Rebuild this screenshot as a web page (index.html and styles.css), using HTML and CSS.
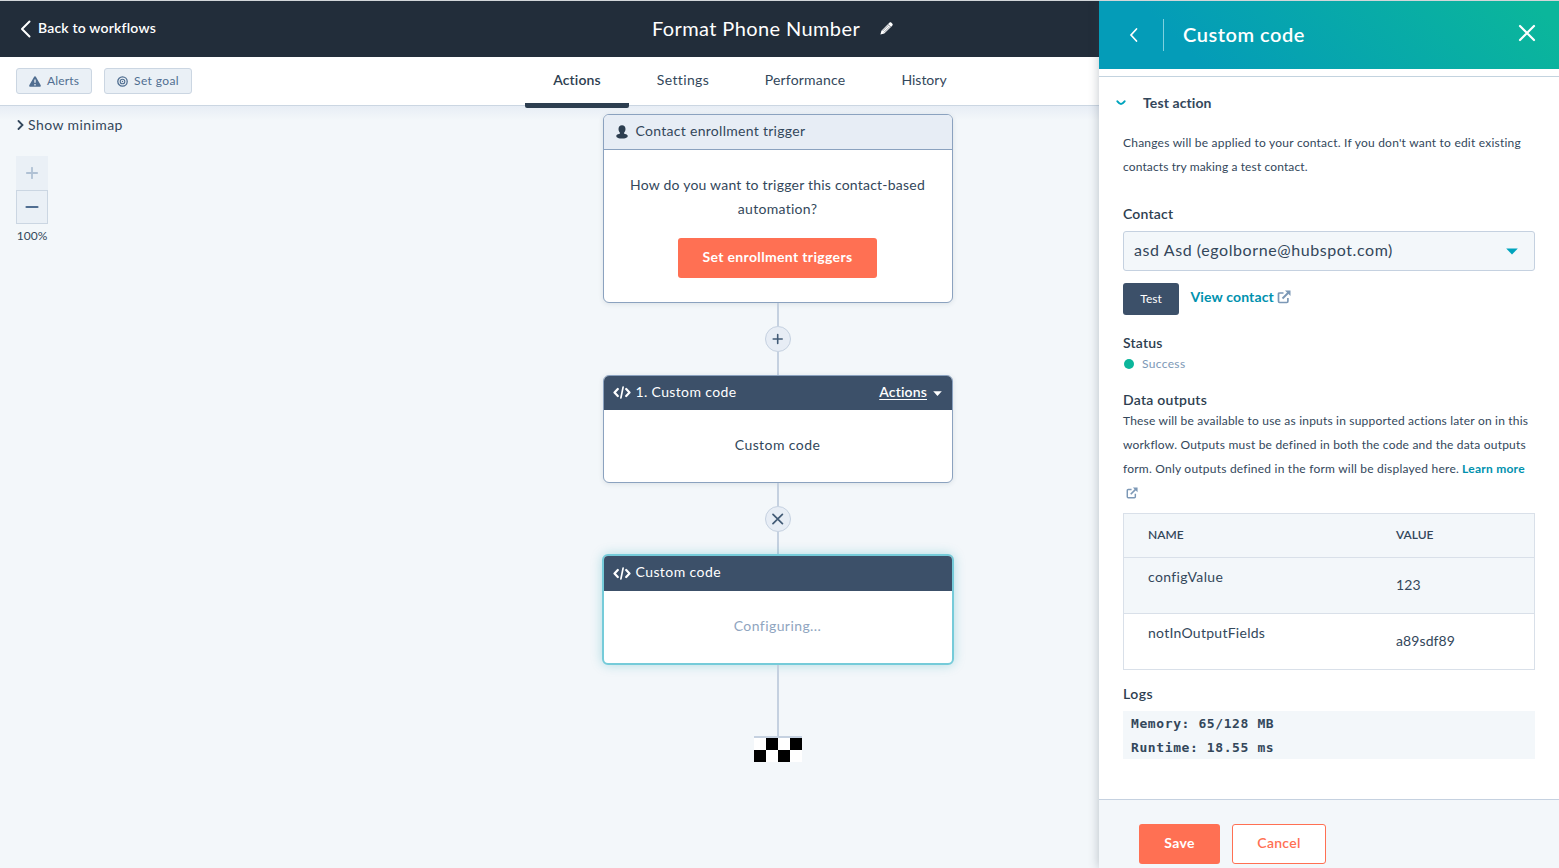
FILE: index.html
```html
<!DOCTYPE html>
<html lang="en">
<head>
<meta charset="utf-8">
<title>Format Phone Number</title>
<link rel="stylesheet" href="styles.css">
</head>
<body>
<div class="app">
  <header class="topbar">
    <a class="back"><svg width="12" height="18" viewBox="0 0 12 18"><path d="M9.500 1.500 2 9l7.500 7.500" fill="none" stroke="#fff" stroke-width="2" stroke-linecap="round" stroke-linejoin="round"/></svg><span class="back-label">Back to workflows</span></a>
    <h1 class="title"><span class="title-label">Format Phone Number</span><svg width="13" height="13" viewBox="0 0 13 13"><path d="M.4 12.600 1.400 8.700 8.600 1.500 9.600.6c.5-.5 1.100-.4 1.600 0l1.200 1.200c.5.5.5 1.100 0 1.600l-.9 1-7.200 7.200z" fill="#fff"/><path d="m2.600 9 5.800-5.800M4 10.400l5.800-5.800M8 2.200l2.800 2.800" stroke="#222d3a" stroke-width=".5"/></svg></h1>
  </header>
  <div class="toolbar">
    <div class="tools">
      <button class="tool alerts"><svg width="12" height="11" viewBox="0 0 12 11"><path d="M6 .3c.5 0 .8.3 1 .7l4.600 8.100c.5.9.1 1.700-.9 1.700H1.300c-1 0-1.400-.8-.9-1.700L5 1c.2-.4.5-.7 1-.7z" fill="#506e91"/><path d="M6 3.600v3.200M6 8v1.400" stroke="#eaf0f6" stroke-width="1.300"/></svg><span class="tool-label">Alerts</span></button>
      <button class="tool goal"><svg width="11" height="11" viewBox="0 0 11 11" fill="none" stroke="#506e91"><circle cx="5.500" cy="5.500" r="4.700" stroke-width="1.300"/><circle cx="5.500" cy="5.500" r="2.300" stroke-width="1.100"/><circle cx="5.500" cy="5.500" r=".7" fill="#506e91" stroke="none"/></svg><span class="tool-label">Set goal</span></button>
    </div>
    <nav class="tabs">
      <a class="tab tab-actions"><span>Actions</span></a>
      <a class="tab tab-settings"><span>Settings</span></a>
      <a class="tab tab-performance"><span>Performance</span></a>
      <a class="tab tab-history"><span>History</span></a>
    </nav>
  </div>
  <main class="canvas">
    <aside class="map-tools">
      <a class="minimap"><svg width="8" height="10" viewBox="0 0 8 10"><path d="m2.500 1 4 4-4 4" fill="none" stroke="#33475b" stroke-width="1.800" stroke-linecap="round"/></svg><span>Show minimap</span></a>
      <div class="zoom">
        <button class="zoom-in"><svg width="12" height="12" viewBox="0 0 12 12"><path d="M.8 6h10.400M6 .8v10.400" stroke="#b0c1d4" stroke-width="1.800" stroke-linecap="round"/></svg></button>
        <button class="zoom-out"><svg width="14" height="12" viewBox="0 0 14 12"><path d="M1.500 6h11" stroke="#506e91" stroke-width="2.200" stroke-linecap="round"/></svg></button>
        <span class="zoom-level">100%</span>
      </div>
    </aside>
    <section class="flow">
      <article class="card trigger">
        <div class="trigger-head"><svg width="12" height="14" viewBox="0 0 12 14"><path d="M6 .3c2.200 0 3.500 1.500 3.500 3.700 0 1.600-.7 3.200-1.700 4 .1.500.4.700 1.100.9 1.900.4 2.800.9 2.800 2.100 0 1.800-2.700 2.600-5.700 2.600S.3 12.800.3 11c0-1.200.9-1.700 2.800-2.100.7-.2 1-.4 1.100-.9-1-.8-1.700-2.400-1.700-4C2.500 1.800 3.800.3 6 .3z" fill="#2d3e50"/></svg><span class="head-label enrollment">Contact enrollment trigger</span></div>
        <div class="trigger-body"><p class="ask"><span class="ask-1">How do you want to trigger this contact-based</span><br><span class="ask-2">automation?</span></p><button class="btn-primary enroll"><span>Set enrollment triggers</span></button></div>
      </article>
      <div class="line short"></div>
      <button class="node"><svg width="12" height="12" viewBox="0 0 12 12"><path d="M1.200 6h9M5.700 1.500v9" stroke="#425b76" stroke-width="1.600" stroke-linecap="round"/></svg></button>
      <div class="line short"></div>
      <article class="card">
        <div class="code-head"><svg class="code" width="18" height="13" viewBox="0 0 18 13"><path d="M4.800 3 1.500 6.500 4.800 10M13.200 3l3.300 3.500-3.300 3.500" fill="none" stroke="#fff" stroke-width="2.200" stroke-linecap="round" stroke-linejoin="round"/><path d="M10.100 1.200 7.900 11.800" stroke="#fff" stroke-width="1.700" stroke-linecap="round"/></svg><span class="head-label step">1. Custom code</span><a class="actions">Actions</a><svg class="caret" width="9" height="5" viewBox="0 0 9 5"><path d="M.2.3h8.600L4.500 4.900z" fill="#fff"/></svg></div>
        <div class="card-body"><span>Custom code</span></div>
      </article>
      <div class="line short"></div>
      <button class="node"><svg width="12" height="12" viewBox="0 0 12 12"><path d="m1 1.300 9.400 9.400M10.400 1.300 1 10.700" stroke="#425b76" stroke-width="1.700" stroke-linecap="round"/></svg></button>
      <div class="line third"></div>
      <article class="card active">
        <div class="code-head"><svg class="code" width="18" height="13" viewBox="0 0 18 13"><path d="M4.800 3 1.500 6.500 4.800 10M13.200 3l3.300 3.500-3.300 3.500" fill="none" stroke="#fff" stroke-width="2.200" stroke-linecap="round" stroke-linejoin="round"/><path d="M10.100 1.200 7.900 11.800" stroke="#fff" stroke-width="1.700" stroke-linecap="round"/></svg><span class="head-label custom">Custom code</span></div>
        <div class="card-body muted"><span>Configuring...</span></div>
      </article>
      <div class="line long"></div>
      <svg class="finish" width="48" height="24" viewBox="0 0 48 24" shape-rendering="crispEdges"><path fill="#fff" d="M0 0h48v24H0z"/><path d="M12 0h12v12H12zM36 0h12v12H36zM0 12h12v12H0zM24 12h12v12H24z"/></svg>
    </section>
  </main>
</div>
<aside class="panel">
  <header class="panel-head">
    <svg class="prev" width="10" height="16" viewBox="0 0 10 16"><path d="M7.500 2 2 8l5.500 6" fill="none" stroke="#fff" stroke-width="1.700" stroke-linecap="round"/></svg>
    <h2><span>Custom code</span></h2>
    <svg class="close" width="18" height="18" viewBox="0 0 18 18"><path d="m2 2 14 14M16 2 2 16" stroke="#fff" stroke-width="2.200" stroke-linecap="round"/></svg>
  </header>
  <div class="panel-body">
    <h3 class="section"><svg width="10" height="6" viewBox="0 0 10 6"><path d="M1.400 1.300C3 3.200 4 4.100 5 4.100S7 3.200 8.600 1.300" fill="none" stroke="#00a4bd" stroke-width="2" stroke-linecap="round"/></svg><span>Test action</span></h3>
    <p class="note"><span class="note-1">Changes will be applied to your contact. If you don't want to edit existing</span><br><span class="note-2">contacts try making a test contact.</span></p>
    <h4 class="label contact"><span>Contact</span></h4>
    <div class="select"><span>asd Asd (egolborne@hubspot.com)</span><svg width="12" height="7" viewBox="0 0 12 7"><path d="M.2.4h11.600L6 6.500z" fill="#00a4bd"/></svg></div>
    <div class="test-row"><button class="test"><span>Test</span></button><a class="link view">View contact</a><svg class="ext" width="14" height="14" viewBox="0 0 14 14"><path d="M6.500 3H2.600Q1.500 3 1.500 4v7.300q0 1.200 1.100 1.200h7.200q1.100 0 1.100-1.200V8" fill="none" stroke="#7c98b6" stroke-width="1.700"/><path d="m5.500 8.500 6-6" stroke="#7c98b6" stroke-width="1.900"/><path d="M8 .5h5.500V6z" fill="#7c98b6"/></svg></div>
    <h4 class="label status"><span>Status</span></h4>
    <div class="success"><i class="dot"></i><span>Success</span></div>
    <h4 class="label outputs"><span>Data outputs</span></h4>
    <p class="note outputs-note"><span class="out-1">These will be available to use as inputs in supported actions later on in this</span><br><span class="out-2">workflow. Outputs must be defined in both the code and the data outputs</span><br><span class="out-3">form. Only outputs defined in the form will be displayed here.</span> <a class="link learn">Learn more</a><br><svg class="ext-small" width="12" height="12" viewBox="0 0 14 14"><path d="M6.500 3H2.600Q1.500 3 1.500 4v7.300q0 1.200 1.100 1.200h7.200q1.100 0 1.100-1.200V8" fill="none" stroke="#7c98b6" stroke-width="1.700"/><path d="m5.500 8.500 6-6" stroke="#7c98b6" stroke-width="1.900"/><path d="M8 .5h5.500V6z" fill="#7c98b6"/></svg></p>
    <div class="table">
      <div class="row head"><span>NAME</span><span>VALUE</span></div>
      <div class="row shaded"><span class="td-config">configValue</span><span class="value">123</span></div>
      <div class="row"><span class="td-fields">notInOutputFields</span><span class="value">a89sdf89</span></div>
    </div>
    <h4 class="label logs"><span>Logs</span></h4>
    <div class="log"><span>Memory: 65/128 MB</span><span>Runtime: 18.55 ms</span></div>
  </div>
  <footer class="panel-foot"><button class="btn-primary save"><span>Save</span></button><button class="cancel"><span>Cancel</span></button></footer>
</aside>
</body>
</html>
```
FILE: styles.css
```css
* { box-sizing: border-box; }
body { margin: 0; font-family: Lato, "Open Sans", sans-serif; font-size: 14px; line-height: 24px; color: #33475b; overflow: hidden; }
h1, h2, h3, h4, p { margin: 0; font-weight: 400; }
h3, h4 { font-size: 14px; }
button { font: inherit; padding: 0; margin: 0; color: inherit; display: flex; align-items: center; justify-content: center; }
svg { display: block; flex: none; }
span, a { white-space: nowrap; }
.app { width: 1559px; height: 868px; display: flex; flex-direction: column; background: #f5f8fa; border-top: 1px solid #d2d6d9; }
.topbar { height: 56px; flex: none; background: #222d3a; color: #fff; display: grid; grid-template-columns: 1fr auto 1fr; padding: 0 34px 0 20px; }
.back { display: flex; align-items: center; gap: 6px; font-weight: 600; letter-spacing: .19px; padding-bottom: 1px; }
.back-label { padding-bottom: 1px; }
.title { display: flex; align-items: center; gap: 20px; font-size: 20px; letter-spacing: .4px; padding-bottom: 2px; }
.toolbar { height: 49px; flex: none; background: #fff; border-bottom: 1px solid #cbd6e2; display: flex; position: relative; z-index: 1; }
.tools { width: 525px; padding: 11px 16px; display: flex; gap: 12px; }
.tool { height: 26px; border: 1px solid #cbd6e2; border-radius: 3px; background: #eaf0f6; color: #506e91; font-size: 12px; gap: 6px; }
.alerts { width: 76px; letter-spacing: .15px; }
.goal { width: 88px; letter-spacing: .38px; }
.tabs { display: flex; }
.tab { height: 51px; text-align: center; padding-top: 11px; }
.tab-actions { width: 104px; font-weight: 600; letter-spacing: .15px; border-bottom: 5px solid #2d3e50; border-radius: 2px; color: #2d3e50; }
.tab-settings { width: 108px; letter-spacing: .36px; }
.tab-performance { width: 136px; letter-spacing: .2px; }
.tab-history { width: 102px; }
.canvas { flex: 1; display: flex; background: linear-gradient(#e7edf5, #f3f7fa 14px); }
.map-tools { width: 602px; padding: 7px 16px; }
.minimap { display: flex; align-items: center; gap: 4px; letter-spacing: .42px; }
.zoom { width: 32px; margin-top: 19px; display: flex; flex-direction: column; align-items: center; }
.zoom button { width: 32px; height: 34px; background: #eaf0f6; border: 1px solid #eaf0f6; }
.zoom .zoom-out { border-color: #cbd6e2; }
.zoom-level { font-size: 12px; }
.flow { width: 352px; padding-top: 8px; display: flex; flex-direction: column; align-items: center; }
.card { width: 350px; height: 108px; border: 1px solid #8ba2bf; border-radius: 6px; background: #fff; overflow: hidden; box-shadow: 0 1px 5px rgba(45, 62, 80, .12); flex: none; }
.trigger { height: 189px; }
.trigger-head { height: 35px; background: #e7edf5; border-bottom: 1px solid #8ba2bf; display: flex; align-items: center; padding-left: 11.500px; gap: 8px; }
.trigger-body { padding: 23px 1px 0 0; display: flex; flex-direction: column; align-items: center; text-align: center; }
.ask-1 { letter-spacing: .22px; }
.ask-2 { letter-spacing: .3px; }
.btn-primary { background: #ff7053; color: #fff; border: 0; border-radius: 3px; height: 40px; font-weight: 700; padding-bottom: 2px; letter-spacing: .34px; }
.enroll { width: 199px; margin-top: 17px; }
.line { width: 2px; background: #c5d1e0; flex: none; }
.short { height: 23px; }
.third { height: 22px; }
.long { height: 71px; }
.node { width: 26px; height: 26px; border-radius: 50%; border: 1px solid #c5d1e0; background: #e7edf5; flex: none; }
.code-head { height: 34px; background: #3c5069; color: #fff; display: flex; align-items: center; padding: 0 10px 0 8.500px; }
.head-label { padding-bottom: 2px; }
.enrollment { letter-spacing: .29px; }
.step { letter-spacing: .36px; }
.custom { letter-spacing: .42px; padding-bottom: 3px; }
.code { margin: -1px 5px 0 0; }
.actions { margin-left: auto; padding-bottom: 2px; font-weight: 600; letter-spacing: .15px; text-decoration: underline; text-underline-offset: 2px; }
.caret { margin-left: 6px; }
.card-body { height: 72px; padding: 0 1px 2px 0; display: flex; align-items: center; justify-content: center; letter-spacing: .42px; }
.muted { color: #8fa5c0; }
.active { width: 352px; height: 111px; border: 2px solid #75cbd9; box-shadow: 0 0 12px rgba(0, 150, 170, .28); }
.active .code-head { height: 35px; }
.finish { box-sizing: content-box; border-top: 2px solid #c5d1e0; }
.panel { position: absolute; z-index: 2; left: 1099px; top: 1px; width: 460px; height: 867px; background: #fff; display: flex; flex-direction: column; box-shadow: 0 0 10px rgba(45, 62, 80, .3); clip-path: inset(0 0 0 -20px); }
.panel-head { height: 68px; flex: none; background: linear-gradient(45deg, #049cb8 20%, #0bb69b 95%); color: #fff; display: flex; align-items: center; padding: 0 23px 0 30px; }
.panel-head h2 { height: 32px; line-height: 31px; border-left: 1px solid #7fd1de; margin-left: 24px; padding-left: 19px; font-size: 20px; font-weight: 600; letter-spacing: .53px; flex: 1; }
.close { margin-top: -4px; }
.panel-body { margin-top: 7px; height: 723px; border-top: 1px solid #c3d3df; padding: 14px 24px 0; display: flex; flex-direction: column; }
.section { display: flex; align-items: center; gap: 17px; margin-left: -7px; font-weight: 700; letter-spacing: .1px; }
.note { font-size: 12px; margin-top: 16px; }
.note-1 { letter-spacing: .22px; }
.note-2 { letter-spacing: .12px; }
.label { font-weight: 600; color: #2d3e50; letter-spacing: .2px; }
.contact { margin-top: 23px; }
.select { height: 40px; margin-top: 5px; border: 1px solid #c5d1e0; border-radius: 3px; background: #f3f7fa; display: flex; align-items: center; justify-content: space-between; padding: 0 16px 0 10px; font-size: 16px; letter-spacing: .58px; }
.select span { padding-bottom: 2px; }
.test-row { display: flex; margin-top: 12px; }
.test { width: 56px; height: 32px; background: #3c5069; color: #fff; border: 0; border-radius: 3px; font-size: 12px; }
.link { color: #0091ae; font-weight: 700; }
.view { margin: 2px 3px 0 11.500px; letter-spacing: .14px; }
.ext { margin-top: 7px; }
.status { margin-top: 16px; }
.success { display: flex; align-items: center; gap: 8px; font-size: 12px; color: #7c98b6; height: 18px; letter-spacing: .34px; }
.dot { width: 10px; height: 10px; border-radius: 50%; background: #0bb69b; margin: -1px 0 0 1px; }
.outputs { margin-top: 15px; letter-spacing: .25px; }
.outputs-note { margin-top: -3px; height: 96px; }
.out-1 { letter-spacing: .19px; }
.out-2 { letter-spacing: .2px; }
.out-3 { letter-spacing: .22px; }
.learn { letter-spacing: .25px; }
.ext-small { margin: 6px 0 0 3px; }
.table { margin-top: 8px; border: 1px solid #d9e0e9; flex: none; }
.row { height: 56px; display: grid; grid-template-columns: 248px 1fr; padding: 7px 24px; border-bottom: 1px solid #d9e0e9; }
.row:last-child { border: 0; height: 55px; }
.head { height: 44px; font-size: 12px; font-weight: 600; padding-top: 9px; background: #f3f7fa; }
.shaded { background: #f3f7fa; }
.td-config { letter-spacing: .38px; }
.td-fields { letter-spacing: .27px; }
.value { padding-top: 8px; letter-spacing: .1px; }
.logs { margin-top: 12px; letter-spacing: .5px; }
.log { margin-top: 5px; height: 48px; background: #f3f7fa; padding: 1px 0 0 8px; display: flex; flex-direction: column; font: 700 13px/24px "DejaVu Sans Mono", monospace; letter-spacing: .6px; }
.panel-foot { flex: 1; border-top: 1px solid #c5d1e0; background: #f3f7fa; display: flex; gap: 12px; padding: 24px 40px 0; }
.save { width: 81px; }
.cancel { width: 94px; height: 40px; border: 1px solid #ff7053; border-radius: 3px; background: #fff; color: #ff7053; font-weight: 600; letter-spacing: .3px; padding-bottom: 2px; }
```
